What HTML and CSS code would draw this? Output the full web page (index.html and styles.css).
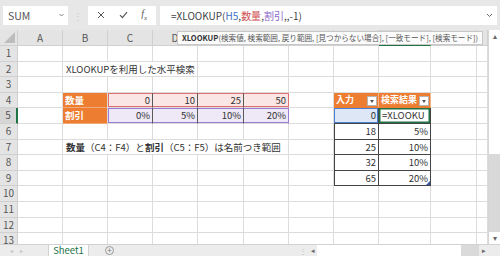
FILE: index.html
```html
<!DOCTYPE html>
<html lang="ja">
<head>
    <meta charset="UTF-8">
    <title>XLOOKUP 水平検索</title>
    <link rel="stylesheet" href="styles.css">
</head>
<body>
    <div class="app">
        <div class="formula-bar">
            <div class="name-box">
                <span>SUM</span>
                <svg class="caret" width="5" height="4" viewBox="0 0 5 4"><path d="M0.5 1 L2.5 3 L4.5 1" fill="none" stroke="#777" stroke-width="0.9"/></svg>
            </div>
            <div class="grip">⋮</div>
            <div class="fx-buttons">
                <svg width="8" height="8" viewBox="0 0 8 8"><path d="M1 1 L7 7 M7 1 L1 7" stroke="#555" stroke-width="1"/></svg>
                <svg width="9" height="8" viewBox="0 0 9 8"><path d="M1 4.2 L3.4 6.6 L8 1.2" fill="none" stroke="#555" stroke-width="1.2"/></svg>
                <span class="fx"><i>f</i><sub>x</sub></span>
            </div>
            <div class="formula">
                <span>=XLOOKUP(<span class="ref-blue">H5</span>,<span class="ref-red">数量</span>,<span class="ref-purple">割引</span>,,-1)</span>
                <svg width="7" height="5" viewBox="0 0 7 5"><path d="M1 1 L3.5 3.5 L6 1" fill="none" stroke="#666" stroke-width="1"/></svg>
            </div>
        </div>

        <div class="tooltip"><b>XLOOKUP</b>(検索値, 検索範囲, 戻り範囲, [見つからない場合], [一致モード], [検索モード])</div>

        <div class="sheet-area">
            <div class="grid">
                <!-- header -->
                <div class="corner"></div>
                <div class="ch">A</div>
                <div class="ch">B</div>
                <div class="ch">C</div>
                <div class="ch">D</div>
                <div class="ch">E</div>
                <div class="ch">F</div>
                <div class="ch">G</div>
                <div class="ch">H</div>
                <div class="ch sel">I</div>
                <div class="ch">J</div>
                <div class="ch"></div>

                <!-- 1 -->
                <div class="rh">1</div>
                <div class="c"></div><div class="c"></div><div class="c"></div><div class="c"></div><div class="c"></div><div class="c"></div>
                <div class="c"></div><div class="c"></div><div class="c"></div><div class="c"></div><div class="c"></div>

                <!-- 2 -->
                <div class="rh">2</div>
                <div class="c"></div>
                <div class="c span3">XLOOKUPを利用した水平検索</div>
                <div class="c"></div><div class="c"></div><div class="c"></div><div class="c"></div>
                <div class="c"></div><div class="c"></div><div class="c"></div>

                <!-- 3 -->
                <div class="rh">3</div>
                <div class="c"></div><div class="c"></div><div class="c"></div><div class="c"></div><div class="c"></div><div class="c"></div>
                <div class="c"></div><div class="c"></div><div class="c"></div><div class="c"></div><div class="c"></div>

                <!-- 4 -->
                <div class="rh">4</div>
                <div class="c"></div>
                <div class="c label">数量</div>
                <div class="c num qty first">0</div>
                <div class="c num qty">10</div>
                <div class="c num qty">25</div>
                <div class="c num qty last">50</div>
                <div class="c"></div>
                <div class="c thead">入力<span class="filter"></span></div>
                <div class="c thead">検索結果<span class="filter"></span></div>
                <div class="c"></div><div class="c"></div>

                <!-- 5 -->
                <div class="rh sel">5</div>
                <div class="c"></div>
                <div class="c label">割引</div>
                <div class="c num rate first">0%</div>
                <div class="c num rate">5%</div>
                <div class="c num rate">10%</div>
                <div class="c num rate last">20%</div>
                <div class="c"></div>
                <div class="c num tb tb-left lookup">0</div>
                <div class="c tb editing">=XLOOKU</div>
                <div class="c"></div><div class="c"></div>

                <!-- 6 -->
                <div class="rh">6</div>
                <div class="c"></div><div class="c"></div><div class="c"></div><div class="c"></div><div class="c"></div><div class="c"></div><div class="c"></div>
                <div class="c num tb tb-left">18</div>
                <div class="c num tb">5%</div>
                <div class="c"></div><div class="c"></div>

                <!-- 7 -->
                <div class="rh">7</div>
                <div class="c"></div>
                <div class="c span5"><b>数量</b>（C4：F4）と<b>割引</b>（C5：F5）は名前つき範囲</div>
                <div class="c"></div>
                <div class="c num tb tb-left">25</div>
                <div class="c num tb">10%</div>
                <div class="c"></div><div class="c"></div>

                <!-- 8 -->
                <div class="rh">8</div>
                <div class="c"></div><div class="c"></div><div class="c"></div><div class="c"></div><div class="c"></div><div class="c"></div><div class="c"></div>
                <div class="c num tb tb-left">32</div>
                <div class="c num tb">10%</div>
                <div class="c"></div><div class="c"></div>

                <!-- 9 -->
                <div class="rh">9</div>
                <div class="c"></div><div class="c"></div><div class="c"></div><div class="c"></div><div class="c"></div><div class="c"></div><div class="c"></div>
                <div class="c num tb tb-left">65</div>
                <div class="c num tb resize">20%</div>
                <div class="c"></div><div class="c"></div>

                <!-- 10 -->
                <div class="rh">10</div>
                <div class="c"></div><div class="c"></div><div class="c"></div><div class="c"></div><div class="c"></div><div class="c"></div>
                <div class="c"></div><div class="c"></div><div class="c"></div><div class="c"></div><div class="c"></div>

                <!-- 11 -->
                <div class="rh">11</div>
                <div class="c"></div><div class="c"></div><div class="c"></div><div class="c"></div><div class="c"></div><div class="c"></div>
                <div class="c"></div><div class="c"></div><div class="c"></div><div class="c"></div><div class="c"></div>

                <!-- 12 -->
                <div class="rh">12</div>
                <div class="c"></div><div class="c"></div><div class="c"></div><div class="c"></div><div class="c"></div><div class="c"></div>
                <div class="c"></div><div class="c"></div><div class="c"></div><div class="c"></div><div class="c"></div>

                <!-- 13 -->
                <div class="rh">13</div>
                <div class="c"></div><div class="c"></div><div class="c"></div><div class="c"></div><div class="c"></div><div class="c"></div>
                <div class="c"></div><div class="c"></div><div class="c"></div><div class="c"></div><div class="c"></div>
            </div>

            <div class="vscroll">
                <div class="arrow">▴</div>
                <div class="track"></div>
                <div class="thumb"></div>
                <div class="arrow">▾</div>
            </div>
        </div>

        <div class="tabs">
            <div class="nav"><span>◂</span><span>▸</span></div>
            <div class="tab">Sheet1</div>
            <div class="add">+</div>
            <div class="spacer"></div>
            <div class="split">⋮</div>
            <div class="hscroll">
                <span class="arrow">◂</span>
                <span class="hthumb"></span>
                <span class="htrack"></span>
                <span class="arrow">▸</span>
            </div>
            <div class="corner-box"></div>
        </div>
    </div>
</body>
</html>
```

FILE: styles.css
```css
body {
    margin: 0;
    padding: 0;
    font-family: "Noto Sans CJK JP", "Noto Sans", sans-serif;
    color: #333;
    background-color: #fff;
}

.app {
    position: relative;
    width: 500px;
    height: 256px;
    overflow: hidden;
    display: flex;
    flex-direction: column;
}

/* formula bar */

.formula-bar {
    height: 30px;
    background-color: #e7e7e7;
    display: flex;
    align-items: center;
    padding: 0 3px;
    box-sizing: border-box;
}

.name-box {
    width: 65px;
    height: 19px;
    background-color: #fff;
    display: flex;
    align-items: center;
    justify-content: space-between;
    padding: 0 4px 0 5px;
    box-sizing: border-box;
    font-size: 10.5px;
    color: #555;
}

.grip {
    width: 20px;
    text-align: center;
    color: #c4c4c4;
    font-size: 10px;
}

.fx-buttons {
    width: 68px;
    height: 19px;
    background-color: #fff;
    display: flex;
    align-items: center;
    justify-content: space-around;
    padding: 0 2px;
    box-sizing: border-box;
}

.fx {
    font-family: "Liberation Serif", serif;
    font-size: 10px;
    color: #555;
}

.fx sub {
    font-size: 7px;
    font-style: italic;
}

.formula {
    flex: 1;
    margin-left: 4px;
    height: 19px;
    background-color: #fff;
    display: flex;
    align-items: center;
    justify-content: space-between;
    padding: 0 4px 0 11px;
    font-size: 10px;
    color: #444;
}

.ref-blue { color: #3d6fc4; }
.ref-red { color: #cf4f4f; }
.ref-purple { color: #8a66c8; }

.tooltip {
    position: absolute;
    left: 177px;
    top: 31px;
    width: 306px;
    height: 14px;
    box-sizing: border-box;
    background-color: #fbfbfb;
    border: 1px solid #c8c8c8;
    font-size: 7.6px;
    line-height: 12px;
    padding-left: 4px;
    white-space: nowrap;
    overflow: hidden;
    color: #555;
    z-index: 2;
}

.tooltip b {
    color: #333;
}

/* sheet */

.sheet-area {
    height: 214px;
    display: flex;
    overflow: hidden;
}

.grid {
    width: 488px;
    display: grid;
    grid-template-columns: 18px 45px 45px 45px 45px 46px 45px 45px 45px 52px 46px 11px;
    grid-template-rows: 16px;
    grid-auto-rows: 15.6px;
    font-size: 9.5px;
}

.grid > div {
    box-sizing: border-box;
    white-space: nowrap;
    line-height: 14.6px;
}

.corner {
    background-color: #e4e4e4;
    border-right: 1px solid #d0d0d0;
    border-bottom: 1px solid #d0d0d0;
    position: relative;
}

.corner::after {
    content: "";
    position: absolute;
    right: 2px;
    bottom: 2px;
    border-left: 11px solid transparent;
    border-bottom: 11px solid #bdbdbd;
}

.ch {
    background-color: #e4e4e4;
    border-right: 1px solid #d0d0d0;
    border-bottom: 1px solid #d0d0d0;
    text-align: center;
    color: #555;
    font-size: 10px;
    line-height: 15px !important;
}

.ch.sel {
    background-color: #d6d6d6;
    border-bottom: 2px solid #217346;
}

.rh {
    background-color: #e4e4e4;
    border-right: 1px solid #d0d0d0;
    border-bottom: 1px solid #d0d0d0;
    text-align: center;
    color: #555;
    font-size: 10px;
}

.rh.sel {
    background-color: #d6d6d6;
    border-right: 2px solid #217346;
}

.c {
    border-right: 1px solid #dcdcdc;
    border-bottom: 1px solid #dcdcdc;
    padding: 0 2px;
    overflow: hidden;
}

.span3 {
    grid-column: span 3;
    overflow: visible;
    padding-left: 3px;
}

.span5 {
    grid-column: span 5;
    overflow: visible;
    padding-left: 3px;
}

.num {
    text-align: right;
}

.label {
    background-color: #ed7d31;
    color: #fff;
    font-weight: bold;
    border-bottom-color: #f3a878;
}

.qty {
    background-color: #fbe6e6;
    border-right-color: #5a5a5a;
    box-shadow: inset 0 1px #e07070, inset 0 -1px #e07070;
}

.rate {
    background-color: #eee8f7;
    border-right-color: #5a5a5a;
    box-shadow: inset 0 1px #9a7bd3, inset 0 -1px #9a7bd3;
}

.qty.first { box-shadow: inset 1px 0 #e07070, inset 0 1px #e07070, inset 0 -1px #e07070; }
.qty.last { border-right-color: #e07070; }
.rate.first { box-shadow: inset 1px 0 #9a7bd3, inset 0 1px #9a7bd3, inset 0 -1px #9a7bd3; }
.rate.last { border-right-color: #9a7bd3; }

.thead {
    background-color: #ed7d31;
    color: #fff;
    font-weight: bold;
    font-size: 9px;
    border-right-color: #f3b48a;
    border-bottom-color: #ed7d31;
    position: relative;
    padding-left: 2px;
}

.filter {
    position: absolute;
    right: 1px;
    top: 3px;
    width: 10px;
    height: 10px;
    box-sizing: border-box;
    background-color: #fff;
    border: 1px solid #b5b5b5;
}

.filter::after {
    content: "";
    position: absolute;
    left: 2px;
    top: 3px;
    border-left: 2.5px solid transparent;
    border-right: 2.5px solid transparent;
    border-top: 3px solid #555;
}

.tb {
    border-right-color: #444;
    border-bottom-color: #444;
}

.tb-left {
    box-shadow: inset 1px 0 #444;
}

.lookup {
    background-color: #dde7f5;
    box-shadow: inset 0 0 0 1px #4a7fd6;
}

.editing {
    background-color: #fff;
    box-shadow: inset 0 0 0 1.5px #217346;
    padding-left: 3px;
    overflow: hidden;
}

.resize {
    position: relative;
}

.resize::after {
    content: "";
    position: absolute;
    right: 0;
    bottom: 0;
    border-left: 4px solid transparent;
    border-bottom: 4px solid #3a55a8;
}

/* vertical scrollbar */

.vscroll {
    width: 12px;
    border-left: 1px solid #d6d6d6;
    box-sizing: border-box;
    display: flex;
    flex-direction: column;
    background-color: #fff;
}

.vscroll .arrow {
    height: 12px;
    font-size: 8px;
    line-height: 12px;
    text-align: center;
    color: #666;
}

.vscroll .track {
    flex: 1;
}

.vscroll .thumb {
    height: 78px;
    background-color: #d9d9d9;
}

/* sheet tabs */

.tabs {
    height: 12px;
    background-color: #ececec;
    border-top: 1px solid #d2d2d2;
    box-sizing: border-box;
    display: flex;
    align-items: stretch;
    font-size: 9.5px;
}

.nav {
    width: 48px;
    display: flex;
    gap: 7px;
    padding-left: 10px;
    box-sizing: border-box;
    color: #c2c2c2;
    font-size: 6px;
    line-height: 11px;
}

.tab {
    width: 41px;
    background-color: #fff;
    color: #217346;
    text-align: center;
    line-height: 11px;
    border-left: 1px solid #d2d2d2;
    border-right: 1px solid #d2d2d2;
    box-sizing: border-box;
}

.add {
    width: 9px;
    height: 9px;
    margin: 1px 0 0 16px;
    border: 1px solid #999;
    border-radius: 50%;
    box-sizing: border-box;
    font-size: 8px;
    line-height: 6px;
    text-align: center;
    color: #777;
}

.spacer {
    flex: 1;
}

.split {
    width: 10px;
    color: #bbb;
    font-size: 8px;
    line-height: 11px;
    text-align: center;
}

.hscroll {
    width: 180px;
    display: flex;
    align-items: stretch;
}

.hscroll .arrow {
    width: 9px;
    color: #666;
    font-size: 7px;
    line-height: 11px;
    text-align: center;
}

.hthumb {
    width: 144px;
    background-color: #fff;
}

.htrack {
    width: 18px;
    background-color: #dadada;
}

.corner-box {
    width: 12px;
    background-color: #ececec;
}
```
